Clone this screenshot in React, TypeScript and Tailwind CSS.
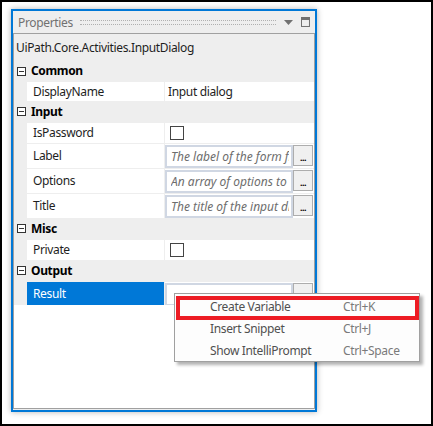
import React from "react"

const font = { fontFamily: '"Noto Sans", "Open Sans", sans-serif' }

function Minus() {
  return (
    <span className="w-[9px] h-[9px] border border-[#333333] bg-white flex items-center justify-center ml-[3px]">
      <span className="w-[5px] h-px bg-[#333333]" />
    </span>
  )
}

function Category({ label, h = "h-[21px]" }: { label: string; h?: string }) {
  return (
    <div className={`flex items-center ${h}`}>
      <Minus />
      <span className="ml-[5px] font-bold text-[12px] text-black">{label}</span>
    </div>
  )
}

function PropRow({
  name,
  children,
  h = "h-[21px]",
  selected = false,
}: {
  name: string
  children?: React.ReactNode
  h?: string
  selected?: boolean
}) {
  return (
    <div className={`flex ml-[13px] ${h} border-t border-[#eeeeee]`}>
      <div
        className={`w-[137px] flex items-center pl-[6px] text-[12px] ${
          selected ? "bg-[#0078d7] text-white" : "bg-white text-[#1e1e1e]"
        }`}
      >
        {name}
      </div>
      <div className="w-px bg-[#eeeeee]" />
      <div className="flex-1 bg-white flex items-center">{children}</div>
    </div>
  )
}

function Checkbox() {
  return <span className="ml-[5px] w-[14px] h-[14px] border border-[#444444] bg-white" />
}

function Editor({ placeholder }: { placeholder?: string }) {
  return (
    <div className="flex items-start h-full pt-[1px]">
      <div className="w-[128px] h-[23px] border-2 border-[#d0d7e3] bg-white flex items-center pl-[4px]">
        <span className="block w-[118px] overflow-hidden italic text-[12px] tracking-normal text-[#6d6d6d] whitespace-nowrap">
          {placeholder}
        </span>
      </div>
      <div className="w-[20px] h-[21px] border border-[#adadad] bg-[#f0f0f0] flex items-end justify-center pb-[3px]">
        {placeholder && <span className="text-[9px] leading-none text-black font-bold tracking-[-0.5px]">...</span>}
      </div>
    </div>
  )
}

export default function App() {
  return (
    <div
      className="relative w-[433px] h-[426px] border-2 border-black bg-white overflow-hidden tracking-[-0.35px]"
      style={font}
    >
      <div className="ml-[9px] mt-[7px] w-[306px] h-[403px] border-2 border-[#0078d7] bg-[#eeeeee] shadow-[0_0_6px_rgba(0,0,0,0.3)] flex flex-col">
        {/* title bar */}
        <div className="h-[22px] flex items-center pl-[5px] pr-[5px] shrink-0">
          <span className="text-[12px] text-[#717171] w-[55px] pt-[1px]">Properties</span>
          <div className="ml-[7px] w-[197px] h-[5px] border-y border-dotted border-[#b0b0b0]" />
          <svg className="ml-[8px]" width="9" height="5" viewBox="0 0 9 5">
            <path d="M0 0h9L4.5 5z" fill="#717171" />
          </svg>
          <svg className="ml-[8px]" width="9" height="10" viewBox="0 0 9 10">
            <rect x="0.5" y="0.5" width="8" height="9" fill="none" stroke="#717171" />
            <rect x="0" y="0" width="9" height="3" fill="#717171" />
          </svg>
        </div>

        {/* grid */}
        <div className="flex-1 border border-[#a0a0a0] mb-[1px] flex flex-col">
          <div className="h-[27px] flex items-center pl-[2px] text-[12px] text-[#1e1e1e]">
            UiPath.Core.Activities.InputDialog
          </div>
          <Category label="Common" h="h-[20px]" />
          <PropRow name="DisplayName" h="h-[20px]">
            <span className="pl-[3px] text-[12px] text-[#1e1e1e]">Input dialog</span>
          </PropRow>
          <Category label="Input" />
          <PropRow name="IsPassword">
            <Checkbox />
          </PropRow>
          <PropRow name="Label" h="h-[25px]">
            <Editor placeholder="The label of the form field" />
          </PropRow>
          <PropRow name="Options" h="h-[25px]">
            <Editor placeholder="An array of options to" />
          </PropRow>
          <PropRow name="Title" h="h-[25px]">
            <Editor placeholder="The title of the input dialog" />
          </PropRow>
          <Category label="Misc" />
          <PropRow name="Private">
            <Checkbox />
          </PropRow>
          <Category label="Output" />
          <PropRow name="Result" h="h-[24px]" selected>
            <Editor />
          </PropRow>
          <div className="flex-1 bg-white" />
        </div>
      </div>

      {/* context menu */}
      <div className="absolute left-[172px] top-[291px] w-[246px] h-[69px] border border-[#a0a0a0] bg-[#fdfdfd] shadow-[3px_3px_3px_rgba(0,0,0,0.3)] pt-[2px]">
        {[
          ["Create Variable", "Ctrl+K"],
          ["Insert Snippet", "Ctrl+J"],
          ["Show IntelliPrompt", "Ctrl+Space"],
        ].map(([label, key]) => (
          <div key={label} className="h-[22px] flex items-center text-[12px]">
            <span className="w-[168px] pl-[35px] text-[#505050]">{label}</span>
            <span className="text-[#7a7a7a]">{key}</span>
          </div>
        ))}
      </div>
      <div className="absolute left-[174px] top-[294px] w-[243px] h-[24px] border-4 border-[#ed1c24]" />
    </div>
  )
}
